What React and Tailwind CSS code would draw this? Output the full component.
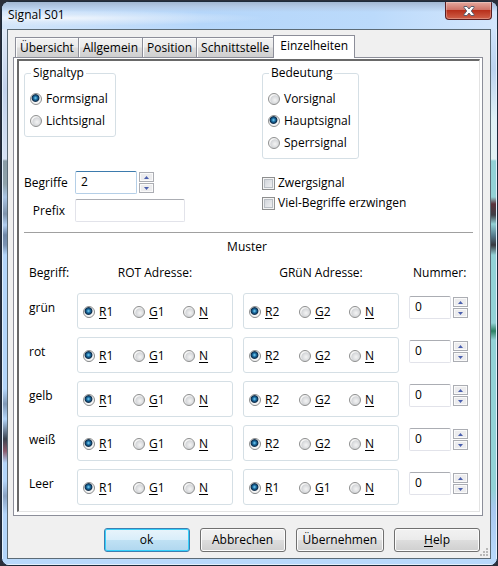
import React, { useState } from "react";

const tabs = ["Übersicht", "Allgemein", "Position", "Schnittstelle", "Einzelheiten"];

const aspects = [
  { name: "grün", red: ["R1", "G1", "N"], green: ["R2", "G2", "N"] },
  { name: "rot", red: ["R1", "G1", "N"], green: ["R2", "G2", "N"] },
  { name: "gelb", red: ["R1", "G1", "N"], green: ["R2", "G2", "N"] },
  { name: "weiß", red: ["R1", "G1", "N"], green: ["R2", "G2", "N"] },
  { name: "Leer", red: ["R1", "G1", "N"], green: ["R1", "G1", "N"] },
];

export default function App() {
  const [tab, setTab] = useState("Einzelheiten");

  return (
    <div className="flex min-h-screen flex-col bg-[#2b2f3a] pt-px pl-px font-['Open_Sans','Noto_Sans',sans-serif] text-xs leading-4 text-black">
      <div className="flex flex-1 flex-col overflow-hidden rounded-lg border border-[#1d2a3a] bg-[#b9d9fb]">
        <TitleBar title="Signal S01" />
        <div className="flex flex-1">
          {/* glass edge, left */}
          <div className="w-[5px] border-l border-[#e4f0fc] bg-[linear-gradient(to_bottom,#dfe8f6_0px,#c3d3ec_60px,#d6e2f4_130px,#8a9ca6_132px,#8fa2aa_155px,#a9c4e4_168px,#7f93ab_185px,#b0cdf0_196px,#6f87a6_206px,#7a92b2_216px,#b3d5fa_226px,#b3d5fa_360px,#8098b6_375px,#b3d5fa_390px,#3b4350_410px,#8a5a6c_422px,#b3d5fa_434px,#b3d5fa_452px,#8aa2c2_467px,#b3d5fa_485px)]"></div>
          <main className="flex flex-1 flex-col border border-[#5c6b76] bg-[#f0f0f0] px-[5px] pt-[5px]">
            <div role="tablist" className="flex items-end pl-[2px]">
              {tabs.map((name) => (
                <Tab key={name} name={name} active={name === tab} onClick={() => setTab(name)} />
              ))}
            </div>
            <div className="mr-[2px] border border-[#8c8e99] bg-white pt-px pr-[2px] pb-[3px] pl-[3px]">
              <div className="border-t-2 border-r border-b border-l-2 border-t-[#696969] border-r-[#e3e3e3] border-b-[#e3e3e3] border-l-[#696969] pt-1 pr-[6px] pl-[5px]">
                <Settings />
                <hr className="mt-[10px] border-[#a0a0a0]" />
                <Pattern />
              </div>
            </div>
            <Footer />
          </main>
          {/* glass edge, right */}
          <div className="w-[6px] border-r border-[#e4f0fc] bg-[linear-gradient(to_bottom,#cfe4fb_0px,#bcd3ef_40px,#dff1f6_90px,#e2f2f4_130px,#93d1d6_132px,#93d1d6_168px,#5c333c_175px,#3e3f47_186px,#93d1d6_195px,#55788a_207px,#38383f_216px,#93d1d6_226px,#93d1d6_294px,#2c7f62_302px,#93d1d6_311px,#93d1d6_460px,#a9c8f0_480px,#b9d9fb_530px)]"></div>
        </div>
        <div className="h-[6px] border-b border-[#e4f0fc]"></div>
      </div>
    </div>
  );
}

function TitleBar({ title }) {
  return (
    <header className="flex h-[27px] items-start justify-between bg-[radial-gradient(ellipse_at_10%_60%,#f2f7fd_0%,#e3eefb99_16%,transparent_34%),linear-gradient(to_bottom,#a3b7d1_0px,#b4cbe8_5px,transparent_10px),linear-gradient(to_right,#d4e6fa_0%,#b5d6fa_40%,#bbdafb_75%,#d3e6fc_100%)] pr-[5px] pl-[6px]">
      <h1 className="pt-[5px]">{title}</h1>
      <button
        type="button"
        aria-label="Close"
        className="flex h-[18px] w-[47px] items-center justify-center rounded-b-[4px] border border-t-0 border-[#5b1f22] bg-[linear-gradient(to_bottom,#e5a99f_0%,#cf7468_45%,#b8301c_50%,#d0614a_100%)] shadow-[inset_0_0_0_1px_#ffffff44]"
      >
        <CloseIcon />
      </button>
    </header>
  );
}

function CloseIcon() {
  return (
    <svg width="12" height="10" viewBox="0 0 12 10">
      <path
        d="M1 .5h3L6 3 8 .5h3v1L8.300 5 11 8.500v1H8L6 7 4 9.500H1v-1L3.700 5 1 1.500z"
        fill="#fff"
        stroke="#5a5f70"
        strokeWidth="1"
      />
    </svg>
  );
}

function Tab({ name, active, onClick }) {
  return (
    <button
      type="button"
      role="tab"
      aria-selected={active}
      onClick={onClick}
      className={
        active
          ? "relative -mb-px -ml-px h-[23px] border border-b-0 border-[#8c8e99] bg-white px-[6px] pb-[2px]"
          : "-ml-px h-5 border border-b-0 border-[#8c8e99] bg-[linear-gradient(to_bottom,#f2f2f2_0%,#ebebeb_48%,#dddddd_52%,#cfcfcf_100%)] px-1 shadow-[inset_1px_1px_0_#fcfcfc] first:ml-0"
      }
    >
      {name}
    </button>
  );
}

function Radio({ name, label, defaultChecked, underline }) {
  return (
    <label className="flex items-center gap-1">
      <input
        type="radio"
        name={name}
        defaultChecked={defaultChecked}
        className="size-3 shrink-0 appearance-none rounded-full border border-[#8e8f8f] bg-[radial-gradient(circle_at_60%_60%,#f4f4f4_0%,#d4d6d9_50%,#f4f4f4_60%)] checked:bg-[radial-gradient(circle_at_45%_40%,#7fd4f5_0%,#1b6fa5_22%,#0d2c4a_42%,#f4f4f4_54%)]"
      />
      {underline ? (
        <span>
          <u className="underline-offset-2">{label[0]}</u>
          {label.slice(1)}
        </span>
      ) : (
        <span>{label}</span>
      )}
    </label>
  );
}

function RadioGroup({ title, name, options, value }) {
  return (
    <fieldset className="rounded-[3px] border border-[#d5dfe5] pr-[7px] pb-[7px] pl-[5px]">
      <legend className="ml-px px-[2px]">{title}</legend>
      <div className="flex flex-col gap-[6px] pt-[10px]">
        {options.map((option) => (
          <Radio key={option} name={name} label={option} defaultChecked={option === value} />
        ))}
      </div>
    </fieldset>
  );
}

function Checkbox({ label }) {
  return (
    <label className="flex items-center gap-[3px]">
      <input
        type="checkbox"
        className="size-[13px] appearance-none border border-[#8e8f8f] bg-[linear-gradient(135deg,#cbcfd5,#f6f6f6)] shadow-[inset_0_0_0_1px_#f4f4f4,inset_0_0_0_2px_#b9bec4] checked:bg-[#1b6fa5]"
      />
      <span>{label}</span>
    </label>
  );
}

function Spinner({ id, label, initial, focused }) {
  const [value, setValue] = useState(initial);

  return (
    <div className="flex items-center gap-[2px]">
      <input
        id={id}
        aria-label={label}
        value={value}
        onChange={(e) => setValue(Number(e.target.value) || 0)}
        className={
          focused
            ? "h-[23px] w-[62px] rounded-[2px] border border-[#b5cfe7] border-t-[#3d7bad] bg-white px-[5px] pb-[2px]"
            : "h-[23px] w-[42px] rounded-[2px] border border-[#e2e3ea] border-t-[#abadb3] bg-white px-[5px] pb-[2px]"
        }
      />
      <div className="flex flex-col gap-px">
        <SpinButton label="Up" path="M0 3 2.500 0 5 3z" onClick={() => setValue(value + 1)} />
        <SpinButton label="Down" path="M0 0 2.500 3 5 0z" onClick={() => setValue(value - 1)} />
      </div>
    </div>
  );
}

function SpinButton({ label, path, onClick }) {
  return (
    <button
      type="button"
      aria-label={label}
      onClick={onClick}
      className="flex h-[10px] w-[15px] items-center justify-center border border-[#abadb3] bg-[#ececee] shadow-[inset_0_0_0_1px_#fafafa]"
    >
      <svg width="5" height="3" viewBox="0 0 5 3">
        <path d={path} fill="#4a5fae" />
      </svg>
    </button>
  );
}

function Settings() {
  return (
    <div className="flex">
      <div className="flex w-[238px] flex-col">
        <div className="flex h-[106px] items-start">
          <RadioGroup title="Signaltyp" name="type" options={["Formsignal", "Lichtsignal"]} value="Formsignal" />
        </div>
        <div className="grid grid-cols-[41px_auto] items-center justify-start gap-x-[10px] gap-y-[5px]">
          <label htmlFor="count" className="text-right whitespace-nowrap">
            Begriffe
          </label>
          <Spinner id="count" initial={2} focused />
          <label htmlFor="prefix" className="text-right">
            Prefix
          </label>
          <input
            id="prefix"
            className="h-[23px] w-[110px] rounded-[2px] border border-[#e2e3ea] border-t-[#abadb3] bg-white px-[5px]"
          />
        </div>
      </div>
      <div className="flex flex-col items-start">
        <RadioGroup
          title="Bedeutung"
          name="meaning"
          options={["Vorsignal", "Hauptsignal", "Sperrsignal"]}
          value="Hauptsignal"
        />
        <div className="mt-4 flex flex-col gap-1">
          <Checkbox label="Zwergsignal" />
          <Checkbox label="Viel-Begriffe erzwingen" />
        </div>
      </div>
    </div>
  );
}

function AddressGroup({ name, options }) {
  return (
    <fieldset
      aria-label={name}
      className="mr-[10px] grid h-9 grid-cols-[50px_50px_auto] rounded-[3px] border border-[#d5dfe5] pt-px pl-[5px]"
    >
      {options.map((option, i) => (
        <Radio key={option} name={name} label={option} defaultChecked={i === 0} underline />
      ))}
    </fieldset>
  );
}

function Pattern() {
  return (
    <table className="ml-[5px] w-[calc(100%-5px)] table-fixed">
      <caption className="pt-[6px] pr-2 pb-[10px]">Muster</caption>
      <colgroup>
        <col className="w-12" />
        <col className="w-[166px]" />
        <col className="w-[166px]" />
        <col />
      </colgroup>
      <thead>
        <tr className="h-7 align-top">
          <th className="text-left font-normal">Begriff:</th>
          <th className="pr-[10px] font-normal">ROT Adresse:</th>
          <th className="pr-[10px] font-normal">GRüN Adresse:</th>
          <th className="pl-1 text-left font-normal">Nummer:</th>
        </tr>
      </thead>
      <tbody>
        {aspects.map((aspect) => (
          <tr key={aspect.name} className="h-11 align-top last:h-[42px]">
            <th scope="row" className="pt-[7px] text-left font-normal">
              {aspect.name}
            </th>
            <td>
              <AddressGroup name={`${aspect.name}-red`} options={aspect.red} />
            </td>
            <td>
              <AddressGroup name={`${aspect.name}-green`} options={aspect.green} />
            </td>
            <td className="pt-[3px]">
              <Spinner label={`Nummer ${aspect.name}`} initial={0} />
            </td>
          </tr>
        ))}
      </tbody>
    </table>
  );
}

function Footer() {
  const button =
    "h-6 min-w-[86px] rounded-[3px] border border-[#707070] bg-[linear-gradient(to_bottom,#f2f2f2_0%,#ebebeb_48%,#dddddd_52%,#cfcfcf_100%)] px-[6px] shadow-[inset_0_0_0_1px_#fcfcfc]";

  return (
    <footer className="relative flex justify-end gap-[10px] pt-3 pr-[5px] pb-[6px]">
      <button
        type="button"
        className="h-6 min-w-[86px] rounded-[3px] border border-[#3c7fb1] bg-[linear-gradient(to_bottom,#e8f4fb_0%,#d9eefa_48%,#bfe1f4_52%,#b0d7ef_100%)] px-[6px] shadow-[inset_0_0_0_1px_#35d0fb]"
      >
        ok
      </button>
      <button type="button" className={button}>
        Abbrechen
      </button>
      <button type="button" className={button}>
        Übernehmen
      </button>
      <button type="button" className={button}>
        <u className="underline-offset-2">H</u>elp
      </button>
      <svg className="absolute -right-[3px] bottom-[2px]" width="8" height="8" viewBox="0 0 8 8" fill="#b8b8b8">
        <path d="M6 0h2v2H6zM3 3h2v2H3zM6 3h2v2H6zM0 6h2v2H0zM3 6h2v2H3zM6 6h2v2H6z" />
      </svg>
    </footer>
  );
}
